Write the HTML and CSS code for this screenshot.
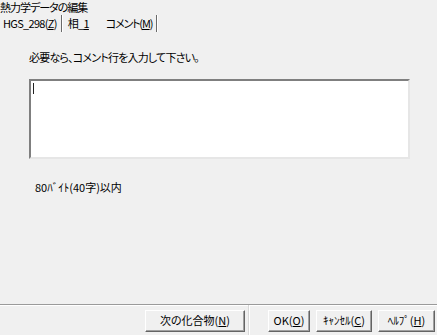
FILE: index.html
```html
<!doctype html>
<html>
<head>
	<meta http-equiv="Content-Type" content="text/html; charset=utf-8" />
	<title>熱力学データの編集</title>
	<link rel="stylesheet" href="styles.css">
</head>
<body>
	<div class="dlg">
		<div class="title">熱力学データの編集</div>
		<div class="tabs">
			<span class="tab">HGS_298(<u>Z</u>)</span>
			<span class="sep"></span>
			<span class="tab">相_<u>1</u></span>
			<span class="tab current">コメント(<u>M</u>)</span>
			<span class="sep"></span>
		</div>
		<div class="page">
			<div class="label">必要なら、コメント行を入力して下さい。</div>
			<div class="edit"><span class="caret"></span></div>
			<div class="note">80ﾊﾞｲﾄ(40字)以内</div>
		</div>
		<div class="footer">
			<span class="btn next">次の化合物(<u>N</u>)</span>
			<span class="divider"></span>
			<span class="btn ok">OK(<u>O</u>)</span>
			<span class="btn cancel">ｷｬﾝｾﾙ(<u>C</u>)</span>
			<span class="btn help">ﾍﾙﾌﾟ(<u>H</u>)</span>
		</div>
	</div>
</body>
</html>
```

FILE: styles.css
```css
body {
	margin: 0;
	padding: 0;
	background: #f0f0f0;
	font-family: "Noto Sans CJK JP", "Liberation Sans", sans-serif;
	font-size: 12px;
	color: #000;
	font-feature-settings: "palt";
}

.dlg {
	width: 437px;
	height: 335px;
	display: flex;
	flex-direction: column;
	overflow: hidden;
}

.title {
	height: 14px;
	line-height: 14px;
	font-size: 11px;
	letter-spacing: -1px;
}

.tabs {
	display: flex;
	align-items: center;
	height: 18px;
	padding-left: 3px;
}

.tab {
	line-height: 16px;
	font-size: 11px;
	letter-spacing: -0.7px;
	white-space: nowrap;
}

.tab u {
	text-underline-offset: 1px;
}

.tabs .tab:first-child {
	margin-right: 4px;
}

.sep {
	width: 1px;
	height: 17px;
	background: #6a6a6a;
	border-right: 1px solid #fff;
}

.tabs .tab:nth-child(3) {
	margin-left: 5px;
}

.tab.current {
	margin-left: 17px;
	margin-right: 4px;
	letter-spacing: -1.2px;
}

.page {
	flex: 1;
	padding: 18px 27px 0 29px;
}

.label {
	line-height: 14px;
	font-size: 11px;
	letter-spacing: -0.8px;
}

.edit {
	margin-top: 15px;
	height: 74px;
	background: #fff;
	border-top: 2px solid #7f7f7f;
	border-left: 2px solid #7f7f7f;
	border-right: 2px solid #e6e6e6;
	border-bottom: 2px solid #e6e6e6;
	padding: 2px 0 0 2px;
}

.caret {
	display: block;
	width: 1px;
	height: 11px;
	background: #222;
}

.note {
	margin-top: 21px;
	margin-left: 6px;
	line-height: 14px;
	font-size: 11px;
}

.footer {
	height: 25px;
	border-top: 1px solid #9a9a9a;
	box-shadow: inset 0 1px 0 #fff;
	display: flex;
	justify-content: flex-end;
	align-items: flex-start;
	padding: 5px 2px 0 0;
}

.btn {
	box-sizing: border-box;
	height: 22px;
	line-height: 18px;
	text-align: center;
	font-size: 11px;
	background: #f0f0f0;
	border-top: 1px solid #fff;
	border-left: 1px solid #fff;
	border-right: 1px solid #646464;
	border-bottom: 1px solid #646464;
	box-shadow: inset -1px -1px 0 #a0a0a0;
	white-space: nowrap;
}

.next {
	width: 100px;
}

.divider {
	width: 1px;
	height: 30px;
	margin: -5px 18px 0 3px;
	background: #d8d8d8;
	border-right: 1px solid #fff;
}

.ok {
	width: 42px;
	margin-right: 6px;
}

.cancel {
	width: 56px;
	margin-right: 6px;
}

.help {
	width: 57px;
}
```
